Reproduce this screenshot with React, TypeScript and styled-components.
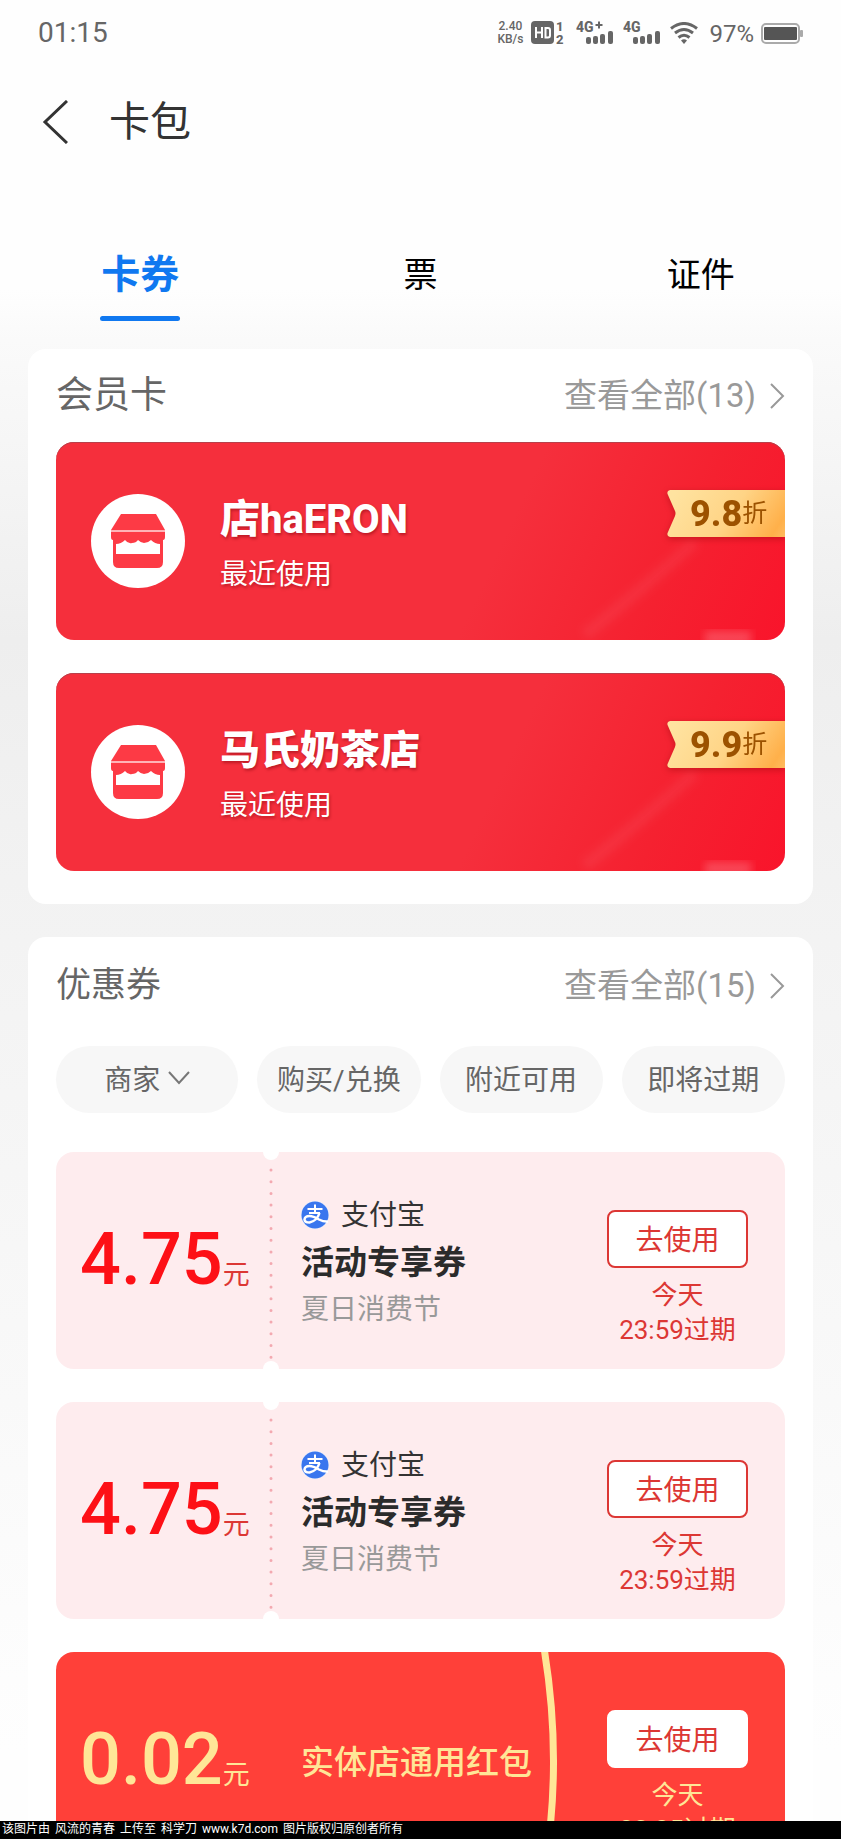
import React from "react";
import styled, { createGlobalStyle } from "styled-components";

const GlobalStyle = createGlobalStyle`
  * { box-sizing: border-box; }
  body { margin: 0; background: #fff; font-family: Roboto, "Noto Sans CJK SC", sans-serif; }
  button { font-family: inherit; padding: 0; border: 0; background: none; cursor: pointer; }
  h1, h2, h3, p { margin: 0; font-weight: 400; }
  a { text-decoration: none; }
`;

const Shell = styled.div`
  height: 100vh;
  display: flex;
  flex-direction: column;
`;

const Screen = styled.div`
  flex: 1;
  min-height: 0;
  overflow-y: auto;
  scrollbar-width: none;
`;

const Page = styled.div`
  background: linear-gradient(#fefefe 0, #fefefe 290px, #fafafa 340px, #eee 640px, #f3f3f3 940px, #f9f9f9 1400px, #fefefe 1750px);
`;

const StatusBar = styled.div`
  display: flex;
  align-items: center;
  justify-content: space-between;
  height: 66px;
  padding: 0 38px;
  color: #666;
`;

const Clock = styled.time`
  font-size: 28px;
  line-height: 32px;
`;

const StatusIcons = styled.div`
  display: flex;
  align-items: center;
  gap: 8px;
`;

const NetSpeed = styled.div`
  font-size: 12px;
  line-height: 13px;
  font-weight: 500;
  text-align: center;
`;

const Battery = styled.div`
  display: flex;
  align-items: center;
  gap: 7px;
  padding: 2px 0 0 3px;
  font-size: 24px;
  line-height: 30px;
`;

const NavBar = styled.header`
  display: flex;
  align-items: center;
  gap: 41px;
  height: 112px;
  padding-left: 42px;
`;

const BackButton = styled.button`
  display: flex;
`;

const PageTitle = styled.h1`
  && { font-size: 41px; line-height: 56px; color: #333; }
`;

const Tabs = styled.nav`
  display: grid;
  grid-template-columns: repeat(3, 1fr);
  margin-top: 65px;
`;

const Tab = styled.button<{ $active?: boolean }>`
  display: flex;
  flex-direction: column;
  align-items: center;
  gap: 9px;
  font-size: ${(p) => (p.$active ? 39 : 34)}px;
  font-weight: ${(p) => (p.$active ? 700 : 400)};
  line-height: 64px;
  color: ${(p) => (p.$active ? "#1078f0" : "#000")};

  &::after {
    content: "";
    width: 80px;
    height: 5px;
    border-radius: 3px;
    background: ${(p) => (p.$active ? "#1078f0" : "transparent")};
  }
`;

const Panels = styled.main`
  display: flex;
  flex-direction: column;
  gap: 33px;
  padding: 28px 28px 33px;
`;

const Panel = styled.section`
  padding: 0 28px 33px;
  border-radius: 18px;
  background: #fff;
`;

const PanelHeader = styled.div<{ $tall?: boolean }>`
  display: flex;
  align-items: center;
  justify-content: space-between;
  height: ${(p) => (p.$tall ? 97 : 93)}px;
  padding-top: 1px;
`;

const PanelTitle = styled.h2<{ $size: number }>`
  && { font-size: ${(p) => p.$size}px; line-height: 48px; color: #666; }
`;

const MoreLink = styled.a`
  display: flex;
  align-items: center;
  gap: 13px;
  font-size: 33px;
  line-height: 48px;
  color: #999;
`;

const Stack = styled.div`
  display: flex;
  flex-direction: column;
  gap: 33px;
`;

const MemberCard = styled.article`
  position: relative;
  display: flex;
  align-items: center;
  gap: 35px;
  height: 198px;
  padding-left: 35px;
  border-radius: 18px;
  overflow: hidden;
  background: linear-gradient(115deg, #f52f3c 0, #f52f3c 60%, #f52130 82%, #f9142b 100%);
  box-shadow: inset 0 1px 0 #b8404a;
`;

const CardGlow = styled.svg`
  position: absolute;
  right: 0;
  bottom: 0;
`;

const ShopBadge = styled.div`
  display: flex;
  align-items: center;
  justify-content: center;
  width: 94px;
  height: 94px;
  border-radius: 50%;
  background: #fff;
`;

const MemberText = styled.div`
  padding-top: 6px;
  color: #fff;
  text-shadow: 1px 2px 3px rgba(120, 0, 10, 0.45);
`;

const MemberName = styled.h3`
  && { font-size: 40px; line-height: 56px; font-weight: 800; }
`;

const MemberNote = styled.p`
  font-size: 28px;
  line-height: 44px;
  padding-top: 5px;
`;

const Ribbon = styled.div`
  position: absolute;
  top: 48px;
  right: 0;
  width: 118px;
  height: 48px;
  filter: drop-shadow(0 2px 3px rgba(120, 0, 0, 0.35));
`;

const RibbonShape = styled.svg`
  display: block;
`;

const RibbonText = styled.div`
  position: absolute;
  inset: 0;
  display: flex;
  align-items: center;
  padding-left: 23px;
  font-size: 25px;
  line-height: 48px;
  color: #9c5200;
  white-space: nowrap;
`;

const Rate = styled.strong`
  font-size: 36px;
  font-weight: 800;
`;

const Filters = styled.div`
  display: grid;
  grid-template-columns: 182fr 163fr 163fr 163fr;
  gap: 19px;
  padding: 12px 0 39px;
`;

const FilterPill = styled.button`
  display: flex;
  align-items: center;
  justify-content: center;
  gap: 8px;
  height: 67px;
  border-radius: 34px;
  && {
    padding-bottom: 4px;
    background: #f7f7f7;
  }
  font-size: 28px;
  color: #666;
`;

const Coupon = styled.article<{ $red?: boolean }>`
  position: relative;
  display: grid;
  grid-template-columns: 215px 1fr 141px;
  align-items: center;
  height: 217px;
  padding-right: 37px;
  border-radius: 18px;
  overflow: hidden;
  background: ${(p) => (p.$red ? "#ff4039" : "#feecee")};
  color: ${(p) => (p.$red ? "#ffe697" : "#dc3734")};
`;

const Perforation = styled.svg`
  position: absolute;
  top: 0;
  left: 207px;
`;

const Arc = styled.svg`
  position: absolute;
  top: 0;
  right: 220px;
`;

const Amount = styled.p<{ $red?: boolean }>`
  padding: 14px 0 0 24px;
  font-size: 27px;
  line-height: 80px;
  white-space: nowrap;

  strong {
    font-size: 72px;
    font-weight: 500;
    color: ${(p) => (p.$red ? "#ffe697" : "#fd1016")};
  }
`;

const CouponInfo = styled.div`
  padding: 4px 0 0 30px;
`;

const Issuer = styled.p`
  display: flex;
  align-items: center;
  gap: 11px;
  font-size: 28px;
  line-height: 46px;
  color: #333;
`;

const CouponName = styled.h3<{ $red?: boolean }>`
  && {
    font-size: 33px;
    line-height: 48px;
    font-weight: ${(p) => (p.$red ? 500 : 700)};
    color: ${(p) => (p.$red ? "#ffe697" : "#2b2b2b")};
  }
`;

const CouponNote = styled.p`
  font-size: 28px;
  line-height: 46px;
  color: #999;
`;

const CouponAction = styled.div`
  display: flex;
  flex-direction: column;
  gap: 10px;
  padding-top: 36px;
  text-align: center;
`;

const UseButton = styled.button<{ $red?: boolean }>`
  && {
    height: 58px;
    padding-bottom: 2px;
    border: 2px solid ${(p) => (p.$red ? "#fff" : "#dc3734")};
    border-radius: 8px;
    background: #fff;
    font-size: 28px;
    color: #dc3734;
  }
`;

const Expiry = styled.p`
  font-size: 26px;
  line-height: 35px;
`;

const Credit = styled.footer`
  display: flex;
  gap: 5px;
  height: 18px;
  padding-left: 2px;
  background: #000;
  color: #fff;
  font-size: 12px;
  line-height: 17px;
  white-space: nowrap;
`;

const Signal = ({ plus }: { plus?: boolean }) => (
  <svg width="39" height="30" viewBox="0 0 39 30" fill="#666">
    <text x="0" y="14" fontSize="14" fontWeight="800">4G</text>
    <rect x="10" y="19" width="5" height="7" rx="2" />
    <rect x="17" y="18" width="5" height="8" rx="2" />
    <rect x="24" y="16" width="5" height="10" rx="2" />
    <rect x="32" y="13" width="5" height="13" rx="2" />
    {plus && <path d="M19.500 7h7M23 3.500v7" stroke="#666" strokeWidth="2" />}
  </svg>
);

const HdIcon = () => (
  <svg width="37" height="32" viewBox="0 0 37 32">
    <rect y="4" width="23" height="23" rx="4" fill="#666" />
    <path d="M5 10v11M11 10v11M5 15.500h6M14.500 11h2.500q2 0 2 2v5.500q0 2-2 2h-2.500z" fill="none" stroke="#fff" strokeWidth="2" />
    <text x="25" y="14" fontSize="13" fontWeight="800" fill="#666">1</text>
    <text x="25" y="27" fontSize="13" fontWeight="800" fill="#666">2</text>
  </svg>
);

const WifiIcon = () => (
  <svg width="28" height="22" viewBox="0 0 28 22" fill="none" stroke="#666" strokeWidth="3">
    <path d="M1 6.500Q14-3.500 27 6.500" />
    <path d="M5 11q9-7 18 0" />
    <path d="M8.500 15.500q5.500-4.500 11 0" />
    <path d="M11 18.500q3-2.500 6 0l-3 3.500z" fill="#666" stroke="none" />
  </svg>
);

const BatteryIcon = () => (
  <svg width="42" height="22" viewBox="0 0 42 22">
    <rect x="1" y="1" width="37" height="19" rx="4" fill="none" stroke="#aaa" strokeWidth="2" />
    <rect x="3" y="4" width="33" height="13" rx="1" fill="#555" />
    <rect x="39" y="7" width="3" height="7" rx="1" fill="#aaa" />
  </svg>
);

const ChevronRight = () => (
  <svg width="16" height="26" viewBox="0 0 16 26" fill="none" stroke="#999" strokeWidth="2">
    <path d="M2 1l12 12L2 25" />
  </svg>
);

const ChevronDown = () => (
  <svg width="22" height="14" viewBox="0 0 22 14" fill="none" stroke="#777" strokeWidth="2">
    <path d="M1 1l10 11L21 1" />
  </svg>
);

const ShopIcon = () => (
  <svg width="54" height="56" viewBox="0 0 54 56" fill="#fd3a45">
    <path d="M10 1h35l9 16H0z" />
    <path d="M0 17h54v2H0z" fill="#ffb3b7" />
    <path d="M0 19h54v5q0 3-2 3v22q0 6-6 6H8q-6 0-6-6V27q-2 0-2-3z" />
    <path d="M5 41V31q5 0 9-4q3 4 7 3q4 0 6-3q3 3 6 3q4 0 7-3q4 4 9 4v10z" fill="#fff" />
  </svg>
);

const AlipayIcon = () => (
  <svg width="29" height="30" viewBox="0 0 29 30">
    <circle cx="14" cy="14" r="14" fill="#e6eefc" />
    <circle cx="14" cy="14" r="13.500" fill="#3a76ee" />
    <g fill="none" stroke="#fff" strokeWidth="2">
      <path d="M6.500 8h15M14 3.500v8M8 12h11" />
      <path d="M18.500 12Q16 20 8.500 21.500Q3.500 21.500 3.500 18.500Q4 15 8.500 15Q12 15 18 18.500Q23 21 27 20.500" strokeWidth="2.500" />
    </g>
  </svg>
);

const MEMBERS = [
  { name: "店haERON", rate: "9.8" },
  { name: "马氏奶茶店", rate: "9.9" },
];

const Member = ({ name, rate, id }: { name: string; rate: string; id: string }) => (
  <MemberCard>
    <CardGlow width="230" height="110" viewBox="0 0 230 110">
      <defs>
        <filter id={`soft-${id}`}><feGaussianBlur stdDeviation="4" /></filter>
      </defs>
      <path d="M30 105Q80 65 140 12" fill="none" stroke="#fff" strokeOpacity="0.06" strokeWidth="12" filter={`url(#soft-${id})`} />
      <rect x="150" y="101" width="46" height="14" fill="#fff" fillOpacity="0.2" filter={`url(#soft-${id})`} />
    </CardGlow>
    <ShopBadge><ShopIcon /></ShopBadge>
    <MemberText>
      <MemberName>{name}</MemberName>
      <MemberNote>最近使用</MemberNote>
    </MemberText>
    <Ribbon>
      <RibbonShape width="118" height="48" viewBox="0 0 118 48">
        <defs>
          <linearGradient id={`gold-${id}`} gradientUnits="userSpaceOnUse" x1="10" y1="0" x2="105" y2="65">
            <stop offset="0" stopColor="#ffe3a0" />
            <stop offset="0.500" stopColor="#ffd486" />
            <stop offset="0.900" stopColor="#ffb04a" />
            <stop offset="1" stopColor="#ffbb5e" />
          </linearGradient>
        </defs>
        <path d="M3 0H118V47H3Q-1 46 1 42L8 26Q9 23 8 21L1 5Q-1 1 3 0z" fill={`url(#gold-${id})`} />
      </RibbonShape>
      <RibbonText><Rate>{rate}</Rate>折</RibbonText>
    </Ribbon>
  </MemberCard>
);

const PinkCoupon = () => (
  <Coupon>
    <Perforation width="16" height="217" viewBox="0 0 16 217">
      <circle cx="8" cy="0" r="8" fill="#fff" />
      <circle cx="8" cy="217" r="8" fill="#fff" />
      <path d="M8 18V206" stroke="#f3a9b0" strokeWidth="3" strokeLinecap="round" strokeDasharray="0 11.700" />
    </Perforation>
    <Amount><strong>4.75</strong>元</Amount>
    <CouponInfo>
      <Issuer><AlipayIcon />支付宝</Issuer>
      <CouponName>活动专享券</CouponName>
      <CouponNote>夏日消费节</CouponNote>
    </CouponInfo>
    <CouponAction>
      <UseButton>去使用</UseButton>
      <Expiry>今天<br />23:59过期</Expiry>
    </CouponAction>
  </Coupon>
);

export default function App() {
  return (
    <Shell>
      <GlobalStyle />
      <Screen>
        <Page>
          <StatusBar>
            <Clock>01:15</Clock>
            <StatusIcons>
              <NetSpeed>2.40<br />KB/s</NetSpeed>
              <HdIcon />
              <Signal plus />
              <Signal />
              <WifiIcon />
              <Battery>97%<BatteryIcon /></Battery>
            </StatusIcons>
          </StatusBar>
          <NavBar>
            <BackButton aria-label="返回">
              <svg width="26" height="44" viewBox="0 0 26 44" fill="none" stroke="#333" strokeWidth="3">
                <path d="M25 1L3 22l22 21" />
              </svg>
            </BackButton>
            <PageTitle>卡包</PageTitle>
          </NavBar>
          <Tabs>
            <Tab $active>卡券</Tab>
            <Tab>票</Tab>
            <Tab>证件</Tab>
          </Tabs>
          <Panels>
            <Panel>
              <PanelHeader>
                <PanelTitle $size={37}>会员卡</PanelTitle>
                <MoreLink href="#members">查看全部(13)<ChevronRight /></MoreLink>
              </PanelHeader>
              <Stack>
                {MEMBERS.map((m, i) => <Member key={m.name} id={String(i)} {...m} />)}
              </Stack>
            </Panel>
            <Panel>
              <PanelHeader $tall>
                <PanelTitle $size={35}>优惠券</PanelTitle>
                <MoreLink href="#coupons">查看全部(15)<ChevronRight /></MoreLink>
              </PanelHeader>
              <Filters>
                <FilterPill>商家<ChevronDown /></FilterPill>
                <FilterPill>购买/兑换</FilterPill>
                <FilterPill>附近可用</FilterPill>
                <FilterPill>即将过期</FilterPill>
              </Filters>
              <Stack>
                <PinkCoupon />
                <PinkCoupon />
                <Coupon $red>
                  <Arc width="24" height="217" viewBox="0 0 24 217">
                    <path d="M3 -4Q22 110 3 221" fill="none" stroke="#ffe697" strokeWidth="7" />
                  </Arc>
                  <Amount $red><strong>0.02</strong>元</Amount>
                  <CouponInfo><CouponName $red>实体店通用红包</CouponName></CouponInfo>
                  <CouponAction>
                    <UseButton $red>去使用</UseButton>
                    <Expiry>今天<br />23:25过期</Expiry>
                  </CouponAction>
                </Coupon>
              </Stack>
            </Panel>
          </Panels>
        </Page>
      </Screen>
      <Credit>
        <span>该图片由</span>
        <span>风流的青春</span>
        <span>上传至</span>
        <span>科学刀</span>
        <span>www.k7d.com</span>
        <span>图片版权归原创者所有</span>
      </Credit>
    </Shell>
  );
}
